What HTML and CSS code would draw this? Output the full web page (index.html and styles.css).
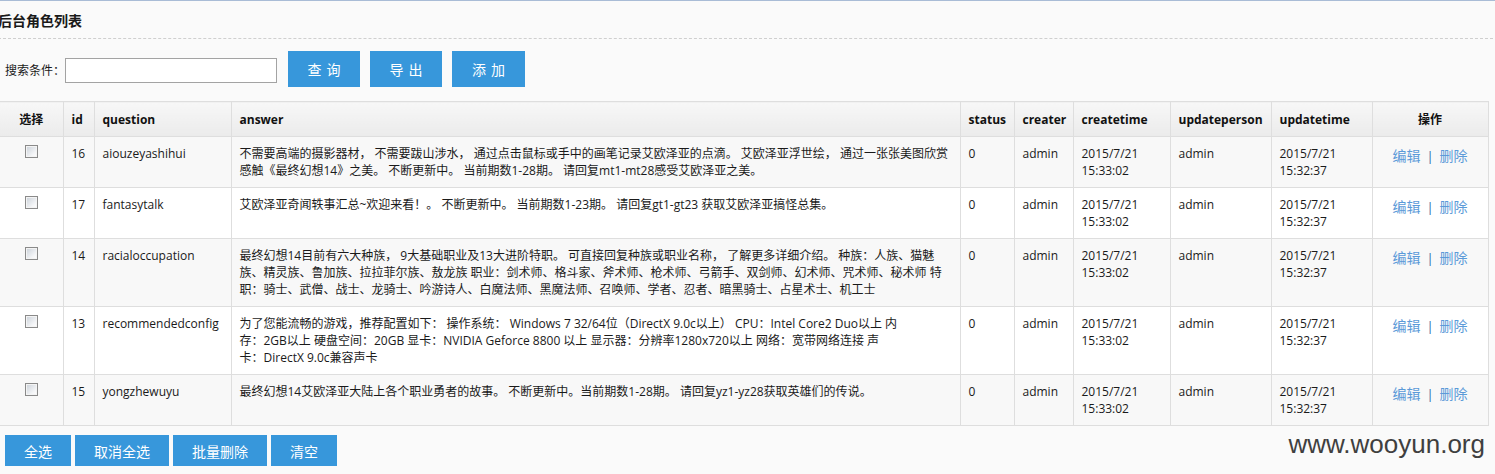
FILE: index.html
```html
<!DOCTYPE html>
<html lang="zh-CN">
<head>
<meta charset="utf-8">
<title>后台角色列表</title>
<link rel="stylesheet" href="styles.css">
</head>
<body>
<div class="page">
  <h1 class="title">后台角色列表</h1>
  <div class="search">
    <label class="search-label">搜索条件：</label>
    <input class="search-input" type="text">
    <div class="actions">
      <button class="btn btn-top">查询</button>
      <button class="btn btn-top">导出</button>
      <button class="btn btn-top">添加</button>
    </div>
  </div>
  <table class="grid">
    <colgroup>
      <col class="c-sel"><col class="c-id"><col class="c-q"><col class="c-a"><col class="c-st"><col class="c-cr"><col class="c-ct"><col class="c-up"><col class="c-ut"><col class="c-op">
    </colgroup>
    <thead>
      <tr>
        <th class="center">选择</th><th>id</th><th>question</th><th>answer</th><th>status</th><th>creater</th><th>createtime</th><th>updateperson</th><th>updatetime</th><th class="center">操作</th>
      </tr>
    </thead>
    <tbody>
      <tr>
        <td class="center"><input type="checkbox" class="chk"></td>
        <td>16</td>
        <td>aiouzeyashihui</td>
        <td>不需要高端的摄影器材， 不需要跋山涉水， 通过点击鼠标或手中的画笔记录艾欧泽亚的点滴。 艾欧泽亚浮世绘， 通过一张张美图欣赏感触《最终幻想14》之美。 不断更新中。 当前期数1-28期。 请回复mt1-mt28感受艾欧泽亚之美。</td>
        <td>0</td><td>admin</td><td>2015/7/21 15:33:02</td><td>admin</td><td>2015/7/21 15:32:37</td>
        <td class="ops"><a href="#">编辑</a><span class="sep">|</span><a href="#">删除</a></td>
      </tr>
      <tr>
        <td class="center"><input type="checkbox" class="chk"></td>
        <td>17</td>
        <td>fantasytalk</td>
        <td>艾欧泽亚奇闻轶事汇总~欢迎来看！。 不断更新中。 当前期数1-23期。 请回复gt1-gt23 获取艾欧泽亚搞怪总集。</td>
        <td>0</td><td>admin</td><td>2015/7/21 15:33:02</td><td>admin</td><td>2015/7/21 15:32:37</td>
        <td class="ops"><a href="#">编辑</a><span class="sep">|</span><a href="#">删除</a></td>
      </tr>
      <tr>
        <td class="center"><input type="checkbox" class="chk"></td>
        <td>14</td>
        <td>racialoccupation</td>
        <td>最终幻想14目前有六大种族， 9大基础职业及13大进阶特职。 可直接回复种族或职业名称， 了解更多详细介绍。 种族：人族、猫魅族、精灵族、鲁加族、拉拉菲尔族、敖龙族 职业：剑术师、格斗家、斧术师、枪术师、弓箭手、双剑师、幻术师、咒术师、秘术师 特职：骑士、武僧、战士、龙骑士、吟游诗人、白魔法师、黑魔法师、召唤师、学者、忍者、暗黑骑士、占星术士、机工士</td>
        <td>0</td><td>admin</td><td>2015/7/21 15:33:02</td><td>admin</td><td>2015/7/21 15:32:37</td>
        <td class="ops"><a href="#">编辑</a><span class="sep">|</span><a href="#">删除</a></td>
      </tr>
      <tr>
        <td class="center"><input type="checkbox" class="chk"></td>
        <td>13</td>
        <td>recommendedconfig</td>
        <td>为了您能流畅的游戏，推荐配置如下： 操作系统： Windows 7 32/64位（DirectX 9.0c以上） CPU：Intel Core2 Duo以上 内<br>存：2GB以上 硬盘空间：20GB 显卡：NVIDIA Geforce 8800 以上 显示器：分辨率1280x720以上 网络：宽带网络连接 声<br>卡：DirectX 9.0c兼容声卡</td>
        <td>0</td><td>admin</td><td>2015/7/21 15:33:02</td><td>admin</td><td>2015/7/21 15:32:37</td>
        <td class="ops"><a href="#">编辑</a><span class="sep">|</span><a href="#">删除</a></td>
      </tr>
      <tr>
        <td class="center"><input type="checkbox" class="chk"></td>
        <td>15</td>
        <td>yongzhewuyu</td>
        <td>最终幻想14艾欧泽亚大陆上各个职业勇者的故事。 不断更新中。当前期数1-28期。 请回复yz1-yz28获取英雄们的传说。</td>
        <td>0</td><td>admin</td><td>2015/7/21 15:33:02</td><td>admin</td><td>2015/7/21 15:32:37</td>
        <td class="ops"><a href="#">编辑</a><span class="sep">|</span><a href="#">删除</a></td>
      </tr>
    </tbody>
  </table>
  <div class="footer-actions">
    <button class="btn btn-bottom">全选</button>
    <button class="btn btn-bottom">取消全选</button>
    <button class="btn btn-bottom">批量删除</button>
    <button class="btn btn-bottom">清空</button>
  </div>
  <div class="watermark">www.wooyun.org</div>
</div>
</body>
</html>
```

FILE: styles.css
```css
html, body {
  margin: 0;
  padding: 0;
  background: #fafafa;
  overflow: hidden;
}

body {
  font-family: "Open Sans", "Noto Sans CJK SC", sans-serif;
  font-size: 12px;
  color: #1a1a1a;
  border-top: 1px solid #a9bcd6;
}

.page {
  position: relative;
  width: 1493px;
  height: 473px;
}

.title {
  margin: 0 0 0 -2px;
  height: 38px;
  box-sizing: border-box;
  padding-top: 11px;
  font-size: 14px;
  line-height: 18px;
  font-weight: bold;
  border-bottom: 1px dashed #cfcfcf;
  width: 1495px;
}

.search {
  display: flex;
  align-items: center;
  height: 62px;
  padding-left: 5px;
}

.search-label {
  font-size: 12px;
  line-height: 16px;
  margin-top: 1px;
}

.search-input {
  width: 212px;
  height: 25px;
  box-sizing: border-box;
  margin: 1px 0 0 0;
  border: 1px solid #a3a3a3;
  background: #fff;
  padding: 0 4px;
  outline: none;
}

.actions {
  display: flex;
  gap: 10px;
  margin-left: 11px;
  margin-top: -3px;
}

.btn {
  border: none;
  background: #3797db;
  color: #fff;
  font-family: "Noto Sans CJK SC", sans-serif;
  cursor: pointer;
  padding: 0;
}

.btn-top {
  width: 72px;
  height: 36px;
  font-size: 14px;
  letter-spacing: 5px;
  text-indent: 5px;
}

.btn-top:last-child {
  width: 73px;
}

.grid {
  border-collapse: collapse;
  table-layout: fixed;
  width: 1488px;
  margin-top: 0;
}

.c-sel { width: 63px; }
.c-id { width: 31px; }
.c-q { width: 137px; }
.c-a { width: 729px; }
.c-st { width: 54px; }
.c-cr { width: 59px; }
.c-ct { width: 97px; }
.c-up { width: 101px; }
.c-ut { width: 101px; }
.c-op { width: 116px; }

.grid th,
.grid td {
  border: 1px solid #dedede;
  text-align: left;
  vertical-align: top;
  padding: 8px 8px;
  line-height: 17px;
  font-size: 12px;
}

.grid tr > :first-child {
  border-left: none;
}

.grid th {
  height: 18px;
  font-weight: bold;
  background: linear-gradient(#f7f7f7, #ebebeb);
  color: #111;
  vertical-align: middle;
  padding-top: 8px;
  padding-bottom: 8px;
}

.grid .center {
  text-align: center;
}

.grid tbody tr:nth-child(odd) td {
  background: #f8f8f8;
}

.grid tbody tr:nth-child(even) td {
  background: #ffffff;
}

.chk {
  appearance: none;
  -webkit-appearance: none;
  width: 13px;
  height: 13px;
  border: 1px solid #8a8a8a;
  box-shadow: inset 0 0 0 1px #f4f4f4;
  background: linear-gradient(135deg, #c9d0d8, #f4f5f7 70%, #ffffff);
  display: block;
  margin: 0 auto;
}

.grid td.ops {
  text-align: center;
  padding-top: 10px;
}

.ops a {
  color: #5b9ad8;
  text-decoration: none;
  font-family: "Noto Sans CJK SC", sans-serif;
  font-size: 14px;
}

.sep {
  color: #2f6aa8;
  margin: 0 6px;
  font-size: 13px;
}

.footer-actions {
  display: flex;
  gap: 4px;
  padding: 9px 0 0 5px;
}

.btn-bottom {
  height: 31px;
  padding: 0 19px;
  font-size: 14px;
  letter-spacing: 0;
}

.watermark {
  position: absolute;
  right: 8px;
  bottom: 14px;
  font-family: "Liberation Sans", Arial, sans-serif;
  font-size: 26px;
  color: #3f3f3f;
}
```
